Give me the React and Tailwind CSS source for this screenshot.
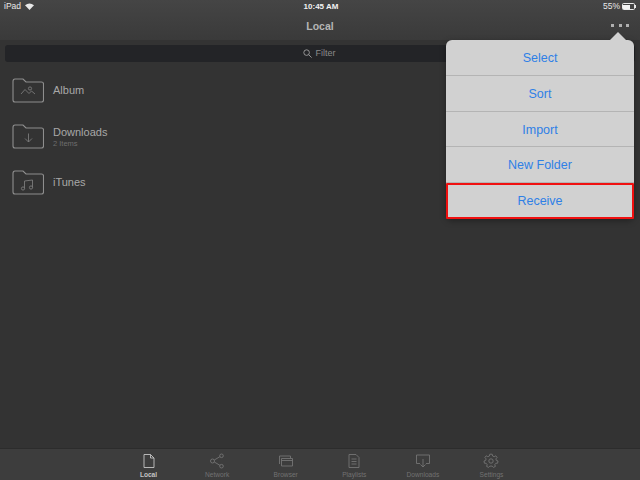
import React from 'react';

const font = { fontFamily: '"Liberation Sans", sans-serif' };

const FolderIcon = ({ children }) => (
  <svg width="32" height="25" viewBox="0 0 32 25" fill="none" stroke="#8e8e8e" strokeWidth="1.1" className="shrink-0">
    <path d="M1 3.5 Q1 1 3 1 H11 L14 4 H29.5 Q31.5 4 31.5 6 V22 Q31.5 24 29.5 24 H3 Q1 24 1 22 Z" />
    <g stroke="#7a7a7a" strokeWidth="0.9">{children}</g>
  </svg>
);

const folders = [
  {
    name: 'Album',
    icon: (
      <>
        <path d="M9 16 L13 11.5 L17 15.5 L19.5 13 L23 16" />
        <circle cx="18" cy="10.5" r="1.6" />
      </>
    )
  },
  {
    name: 'Downloads',
    sub: '2 Items',
    icon: <path d="M16.5 9.5 V18 M13 14.5 L16.5 18 L20 14.5" />
  },
  {
    name: 'iTunes',
    icon: (
      <>
        <path d="M12.5 18.5 V11 L20.5 10 V17.5" />
        <circle cx="11" cy="18.5" r="1.6" />
        <circle cx="19" cy="17.5" r="1.6" />
      </>
    )
  }
];

const tabs = [
  {
    label: 'Local',
    active: true,
    icon: <path d="M3 1.5 H9.5 L13 5 V14.5 H3 Z M9.5 1.5 V5 H13" />
  },
  {
    label: 'Network',
    icon: (
      <>
        <circle cx="3.5" cy="8" r="2" />
        <circle cx="12.5" cy="2.8" r="1.8" />
        <circle cx="12.5" cy="13.2" r="1.8" />
        <path d="M5.3 7 L10.9 3.7 M5.3 9 L10.9 12.3" />
      </>
    )
  },
  {
    label: 'Browser',
    icon: <path d="M1.5 11 V3 H12.5 V5 M3.5 5.5 H14.5 V13 H3.5 Z M3.5 7.5 H14.5" />
  },
  {
    label: 'Playlists',
    icon: <path d="M3 1.5 H10 L13 4.5 V14.5 H3 Z M5.5 6 H10.5 M5.5 8.5 H10.5 M5.5 11 H10.5" />
  },
  {
    label: 'Downloads',
    icon: <path d="M5 10.5 H1.5 V2 H14.5 V10.5 H11 M8 6 V13.5 M5.5 11.5 L8 14 L10.5 11.5" />
  },
  {
    label: 'Settings',
    icon: (
      <>
        <path d="M6.8 1.2 H9.2 L9.6 3 L11.2 3.7 L12.8 2.8 L14.1 4.5 L12.9 5.9 L13.3 7.4 L15 8 L14.6 10.2 L12.8 10.3 L11.8 11.7 L12.4 13.4 L10.4 14.4 L9.2 13.1 H6.8 L5.6 14.4 L3.6 13.4 L4.2 11.7 L3.2 10.3 L1.4 10.2 L1 8 L2.7 7.4 L3.1 5.9 L1.9 4.5 L3.2 2.8 L4.8 3.7 L6.4 3 Z" />
        <circle cx="8" cy="8" r="2.2" />
      </>
    )
  }
];

const menuItems = ['Select', 'Sort', 'Import', 'New Folder'];

export default function App() {
  return (
    <div className="relative w-[640px] h-[480px] overflow-hidden flex flex-col bg-[#333333]" style={font}>
      <div className="h-[40px] shrink-0 bg-gradient-to-b from-[#454545] to-[#3a3a3a]">
        <div className="h-[13px] px-[4px] flex items-center justify-between text-[8.5px] text-[#e8e8e8]">
          <div className="flex items-center gap-[4px]">
            <span>iPad</span>
            <svg width="9" height="7" viewBox="0 0 9 7" fill="#e8e8e8">
              <path d="M0 2.2 Q4.5 -1.4 9 2.2 L4.5 7 Z" />
            </svg>
          </div>
          <span className="ml-[5px] text-[8px] font-bold text-[#f2f2f2]">10:45 AM</span>
          <div className="flex items-center gap-[2px]">
            <span>55%</span>
            <div className="flex items-center">
              <div className="w-[13px] h-[7px] border border-[#e8e8e8] rounded-[1.5px] p-[0.5px]">
                <div className="w-[7px] h-full bg-[#f2f2f2]" />
              </div>
              <div className="w-[1px] h-[3px] bg-[#e8e8e8]" />
            </div>
          </div>
        </div>
        <div className="relative flex justify-center text-[10.5px] font-bold text-[#b5b5b5] mt-[6px]">
          Local
          <div className="absolute right-[11px] top-[5px] flex gap-[4.5px]">
            <div className="w-[3px] h-[3px] bg-[#b0b0b0]" />
            <div className="w-[3px] h-[3px] bg-[#b0b0b0]" />
            <div className="w-[3px] h-[3px] bg-[#b0b0b0]" />
          </div>
        </div>
      </div>

      <div className="flex-1 px-[5px] pt-[5px]">
        <div className="h-[17px] rounded-[3px] bg-[#232427] flex items-center justify-center gap-[4px] pr-[2px] text-[9px] text-[#8a8a8a]">
          <svg width="9" height="9" viewBox="0 0 9 9" fill="none" stroke="#a0a0a0" strokeWidth="0.9">
            <circle cx="3.6" cy="3.6" r="2.8" />
            <path d="M5.7 5.7 L8.6 8.6" />
          </svg>
          <span>Filter</span>
        </div>
        <div className="mt-[16px] pl-[7px] flex flex-col gap-[21px]">
          {folders.map((f) => (
            <div key={f.name} className="flex items-center gap-[9px] h-[25px]">
              <FolderIcon>{f.icon}</FolderIcon>
              <div className="flex flex-col">
                <span className="text-[11px] leading-[13px] text-[#a8a8a8]">{f.name}</span>
                {f.sub && <span className="text-[7.5px] leading-[9px] text-[#6e6e6e]">{f.sub}</span>}
              </div>
            </div>
          ))}
        </div>
      </div>

      <div className="h-[32px] shrink-0 bg-[#3d3d3d] border-t border-[#2c2c2c] flex justify-center">
        {tabs.map((t) => (
          <div key={t.label} className="w-[68.6px] flex flex-col items-center pt-[4px]">
            <svg width="16" height="16" viewBox="0 0 16 16" fill="none" stroke={t.active ? '#c4c4c4' : '#747474'} strokeWidth="0.9">
              {t.icon}
            </svg>
            <span className={t.active ? 'text-[6.6px] leading-[9px] mt-[1px] font-bold text-[#c4c4c4]' : 'text-[6.6px] leading-[9px] mt-[1px] text-[#727272]'}>
              {t.label}
            </span>
          </div>
        ))}
      </div>

      {/* popover menu */}
      <div className="absolute left-[446px] top-[40px] w-[188px] rounded-[6px] bg-[#d1d1d1] shadow-[0_2px_6px_rgba(0,0,0,0.35)]">
        <div className="absolute top-[-8px] left-[164px] w-0 h-0 border-l-[8px] border-r-[8px] border-b-[8px] border-l-transparent border-r-transparent border-b-[#d1d1d1]" />
        {menuItems.map((item) => (
          <div key={item} className="h-[35.75px] pt-[2px] flex items-center justify-center text-[12.5px] text-[#2f80e6] border-b border-[#b4b4b4]">
            {item}
          </div>
        ))}
        <div className="h-[36px] pt-[1px] flex items-center justify-center text-[12.5px] text-[#2f80e6] border-2 border-[#f01010] rounded-[1px]">
          Receive
        </div>
      </div>
    </div>
  );
}
